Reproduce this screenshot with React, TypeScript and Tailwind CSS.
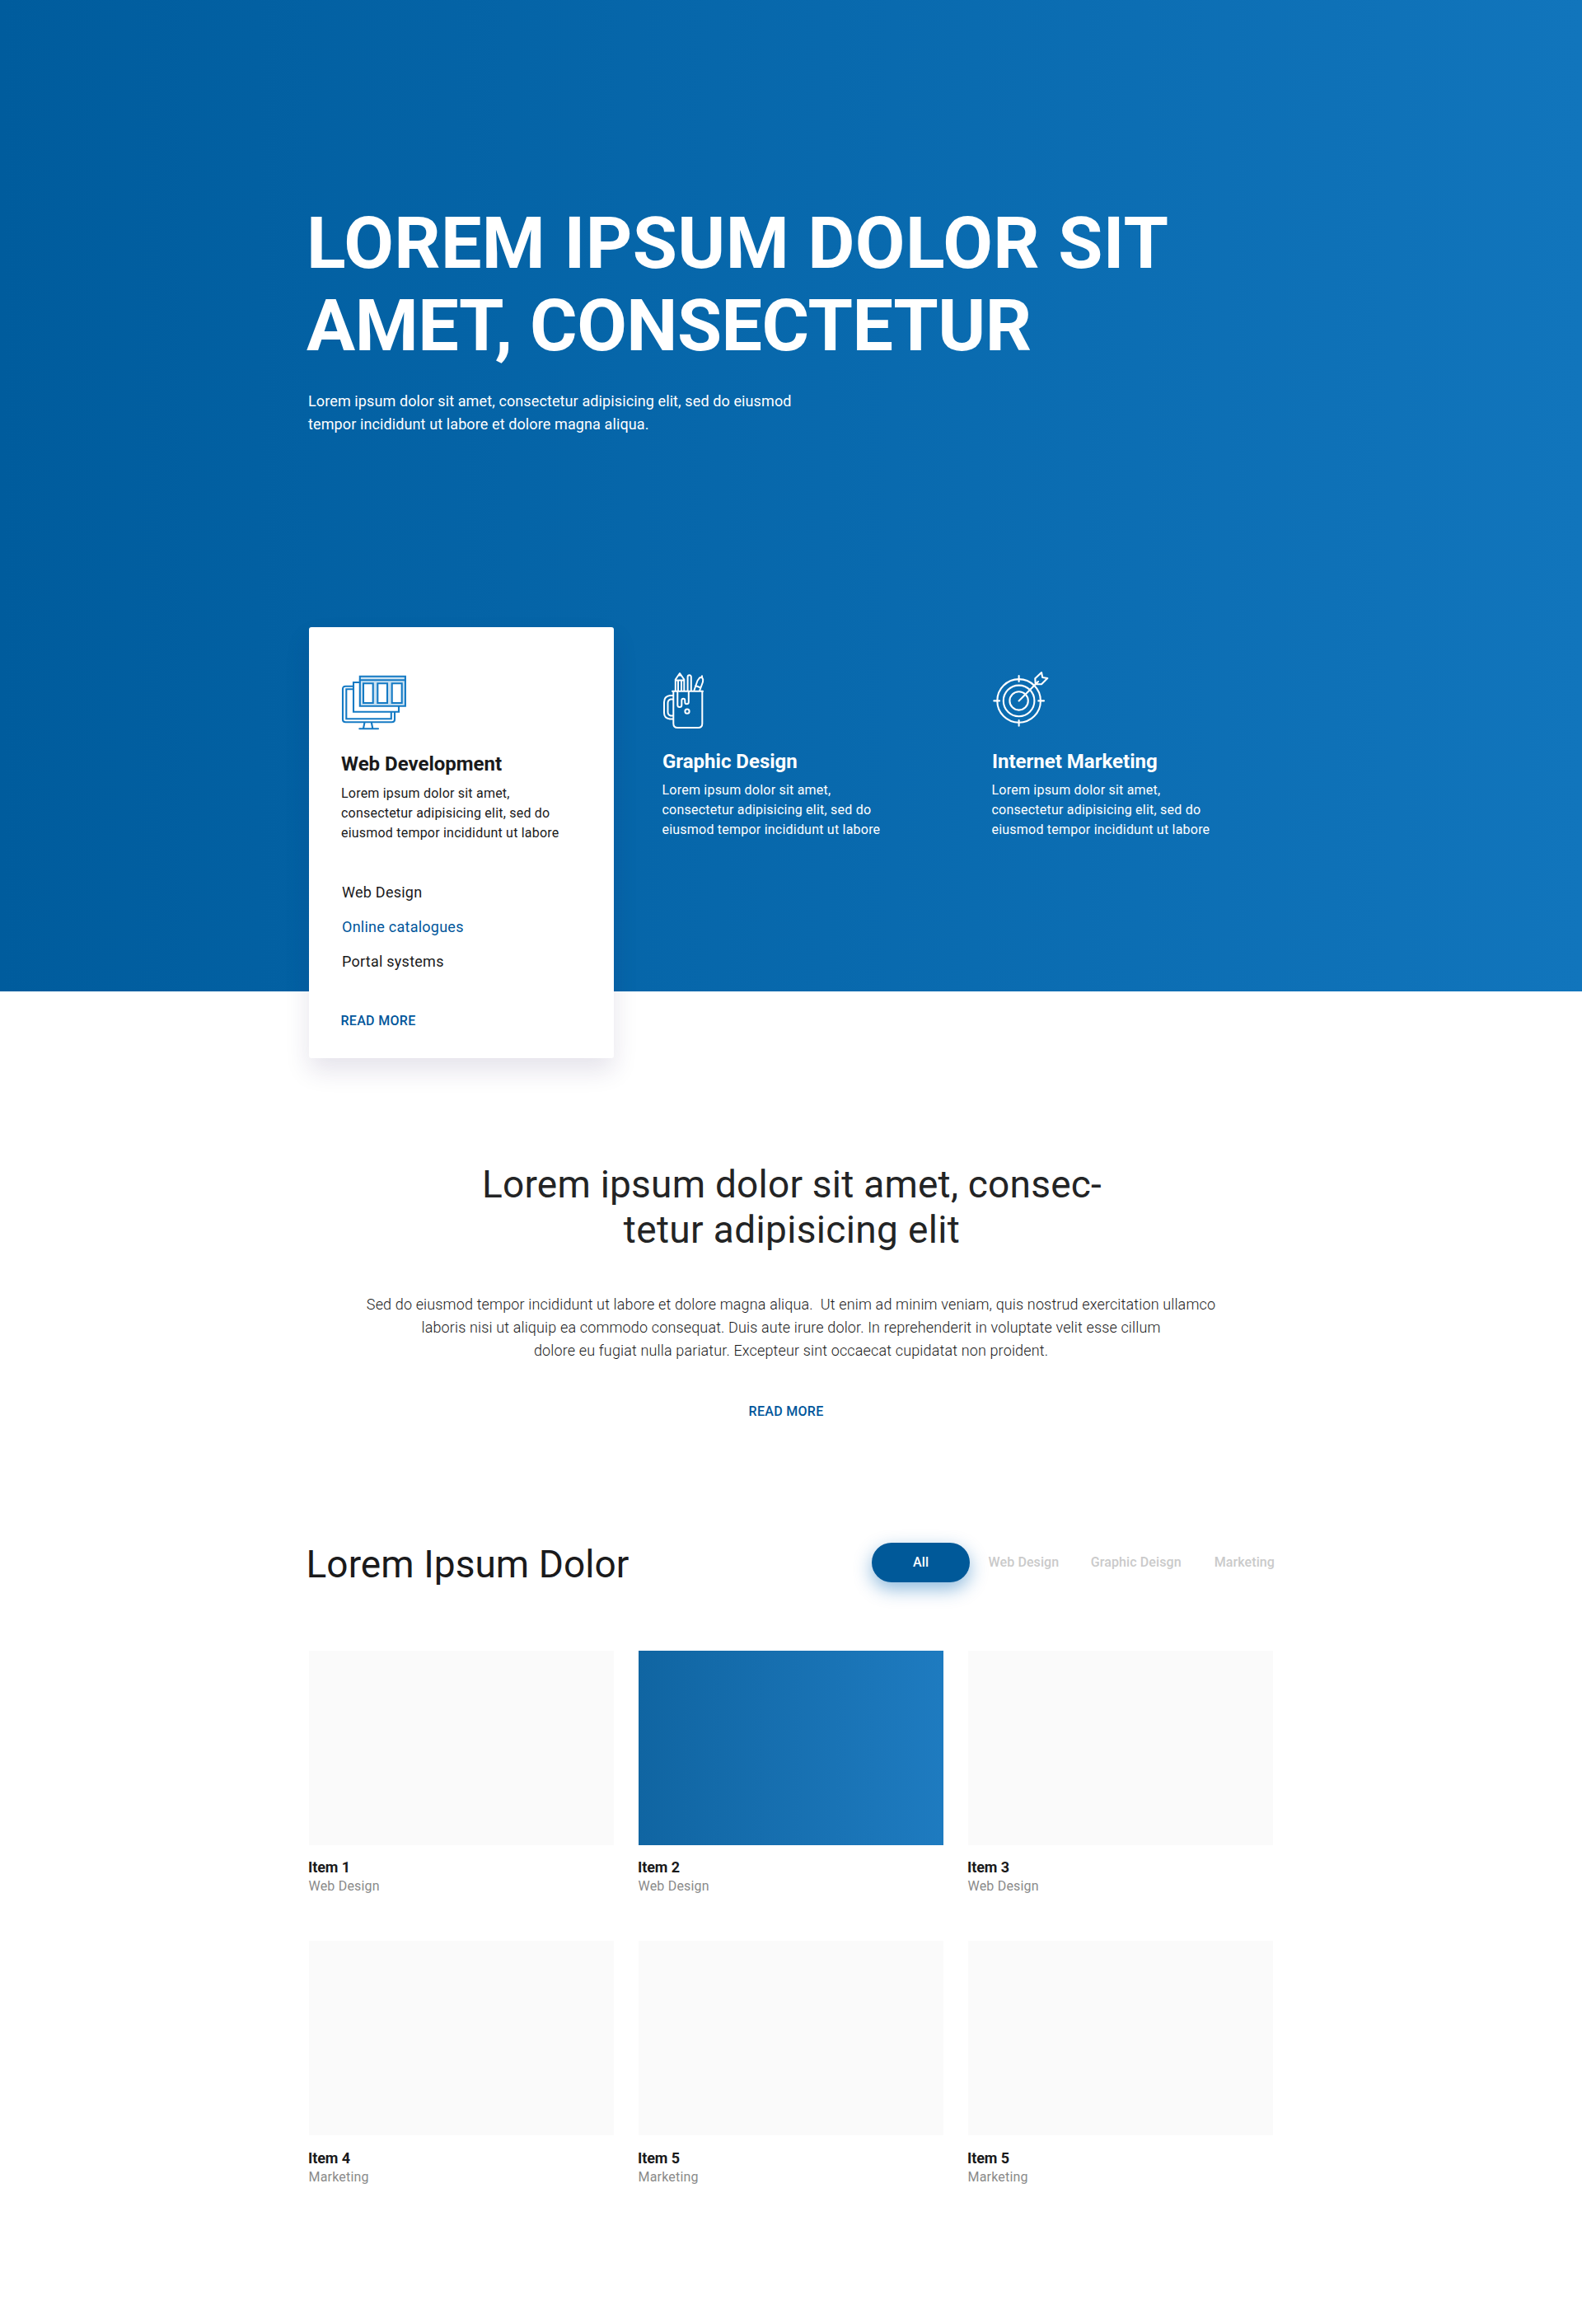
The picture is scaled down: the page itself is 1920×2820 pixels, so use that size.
function MonitorIcon() {
  return (
    <svg width="80" height="68" viewBox="0 0 80 68" fill="none" stroke="#147ac4" strokeWidth="2.1" strokeLinecap="round" className="block">
      <path d="M22.8 1.8H77.9V37.8H22.8ZM27 10.3V34H38.7V10.3ZM44.3 10.3V34H56V10.3ZM61.7 10.3V34H73.7V10.3Z" fill="#147ac4" fillOpacity="0.22" fillRule="evenodd" stroke="none" />
      <path d="M22.8 1.8H77.9V37.8H22.8Z" />
      <path d="M22.8 6.3H78" />
      <path d="M27 10.3H38.7V34H27ZM44.3 10.3H56V34H44.3ZM61.7 10.3H73.7V34H61.7Z" />
      <path d="M22.8 9H15V44.7H70V38" />
      <path d="M14 13.7H5.5Q2 13.7 2 17V54Q2 57.3 5.5 57.3H61.5Q65 57.3 65 54V45.5" />
      <path d="M14 17.2H6.3V53.3H60.8V45.5" />
      <path d="M28.4 58L27 65M36.9 58L38.3 65M22.3 65.3H45" />
    </svg>
  );
}

function MugIcon() {
  return (
    <svg width="54" height="70" viewBox="0 0 54 70" fill="none" stroke="#fff" strokeWidth="2" strokeLinecap="round" strokeLinejoin="round" className="block">
      <path d="M12 23.7H49" />
      <path d="M13.3 24V63Q13.3 68 18.3 68H43.3Q48.3 68 48.3 63V24" />
      <path d="M12.7 29H9Q2 30 2 37V50Q2 56.5 9 57.6H12.7" />
      <path d="M12.7 33.5H10Q6.5 34.5 6.5 38V49Q6.5 52.5 10 53.5H12.7" />
      <path d="M15.8 23V9.5L21 2L26.3 9.5V23M15.8 10.5H26.3M19 11V23M23 11V23M20 4.5H22" />
      <path d="M30.6 23V6.5Q30.6 4.3 32.7 4.3T34.8 6.5V23" />
      <path d="M38.5 22.5L42.5 11L45 7.5L47.8 6.5L49.2 9.5L49 12.5L45.3 22.5M40 17L46.5 19.5M48 5.3V6.5" />
      <path d="M18.3 24V40.5Q18.3 43 20.8 43T23.3 40.5V35Q23.3 32.8 25.3 32.8T27.3 35V37Q27.3 39.3 29.5 39.3T31.8 37V24" />
      <circle cx="30" cy="48.2" r="2.6" />
    </svg>
  );
}

function TargetIcon() {
  return (
    <svg width="70" height="70" viewBox="0 0 70 70" fill="none" stroke="#fff" strokeWidth="2.1" strokeLinecap="round" strokeLinejoin="round" className="block">
      <circle cx="32.6" cy="36.4" r="26.3" />
      <circle cx="32.6" cy="36.4" r="18.8" />
      <circle cx="32.6" cy="36.4" r="11.2" />
      <path d="M2.3 36.4H9M56.3 36.4H63M32.6 6V13M32.6 60V66.7" />
      <path d="M32.6 36.4L56 13M52.7 16L52.3 9.3L60 2L61.2 8L67.3 9L60 16.2Z" />
    </svg>
  );
}

const blurb = ["Lorem ipsum dolor sit amet,", "consectetur adipisicing elit, sed do", "eiusmod tempor incididunt ut labore"];

function Lines({ lines }: { lines: string[] }) {
  return (
    <>
      {lines.map((l) => (
        <span key={l} className="block whitespace-pre">
          {l}
        </span>
      ))}
    </>
  );
}

const items = [
  { title: "Item 1", kind: "Web Design", tile: "h-[236px] bg-[#fafafa]", caption: "pt-4" },
  { title: "Item 2", kind: "Web Design", tile: "h-[236px] bg-linear-to-r from-[#1065a2] to-[#1e7bc0]", caption: "pt-4" },
  { title: "Item 3", kind: "Web Design", tile: "h-[236px] bg-[#fafafa]", caption: "pt-4" },
  { title: "Item 4", kind: "Marketing", tile: "h-[236px] bg-[#fafafa]", caption: "pt-[17px]" },
  { title: "Item 5", kind: "Marketing", tile: "h-[236px] bg-[#fafafa]", caption: "pt-[17px]" },
  { title: "Item 5", kind: "Marketing", tile: "h-[236px] bg-[#fafafa]", caption: "pt-[17px]" },
];

export default function App() {
  return (
    <div className="min-h-[2820px] w-full bg-white font-['Roboto',sans-serif] text-[#1a1a1b]">
      <header className="h-[1203px] bg-linear-to-r from-[#005c9d] to-[#1175bc] pt-[245px] text-white">
        <div className="mx-auto w-[1170px]">
          <h1 className="-ml-[3px] text-[88px] font-bold leading-[100px]">
            <span className="block whitespace-pre tracking-[0.37px]">LOREM IPSUM DOLOR SIT</span>
            <span className="block whitespace-pre tracking-[-0.5px]">AMET, CONSECTETUR</span>
          </h1>
          <p className="-ml-px mt-7 text-[18px] leading-7 tracking-[0.11px]">
            <Lines lines={["Lorem ipsum dolor sit amet, consectetur adipisicing elit, sed do eiusmod", "tempor incididunt ut labore et dolore magna aliqua."]} />
          </p>
          <div className="mt-[232px] flex items-start">
            <article className="h-[523px] w-[370px] rounded-[3px] bg-white pl-[39px] pt-[58px] text-[#1a1a1b] shadow-[0_15px_30px_rgba(40,25,90,0.12)]">
              <MonitorIcon />
              <h2 className="mt-[25px] text-[24px] font-bold leading-[30px]">Web Development</h2>
              <p className="mt-[9px] text-[16px] leading-6 tracking-[0.21px]">
                <Lines lines={blurb} />
              </p>
              <ul className="ml-px mt-[39px] text-[18px] leading-[42px] tracking-[0.25px]">
                <li>Web Design</li>
                <li className="text-[#00569b]">Online catalogues</li>
                <li>Portal systems</li>
              </ul>
              <a className="-ml-[0.5px] mt-[39px] block text-[16px] font-medium leading-6 tracking-[0.3px] text-[#00569b]">READ MORE</a>
            </article>
            <article className="ml-[59px] w-[400px] pt-[54px]">
              <MugIcon />
              <h2 className="mt-6 text-[24px] font-bold leading-[30px]">Graphic Design</h2>
              <p className="-ml-[0.5px] mt-2 text-[16px] leading-6 tracking-[0.22px]">
                <Lines lines={blurb} />
              </p>
            </article>
            <article className="pt-[53px]">
              <TargetIcon />
              <h2 className="mt-[25px] text-[24px] font-bold leading-[30px]">Internet Marketing</h2>
              <p className="-ml-[0.5px] mt-2 text-[16px] leading-6 tracking-[0.22px]">
                <Lines lines={blurb} />
              </p>
            </article>
          </div>
        </div>
      </header>

      <section className="flex flex-col items-center pt-[207px] text-center">
        <h2 className="ml-[2px] text-[46px] leading-[55px] text-[#232425]">
          <span className="block whitespace-pre tracking-[0.23px]">Lorem ipsum dolor sit amet, consec-</span>
          <span className="block whitespace-pre tracking-[0.35px]">tetur adipisicing elit</span>
        </h2>
        <p className="mt-[49px] text-[18px] font-light leading-7 tracking-[0.145px]">
          <Lines
            lines={[
              "Sed do eiusmod tempor incididunt ut labore et dolore magna aliqua.  Ut enim ad minim veniam, quis nostrud exercitation ullamco",
              "laboris nisi ut aliquip ea commodo consequat. Duis aute irure dolor. In reprehenderit in voluptate velit esse cillum",
              "dolore eu fugiat nulla pariatur. Excepteur sint occaecat cupidatat non proident.",
            ]}
          />
        </p>
        <a className="mr-3 mt-12 text-[16px] font-medium leading-6 tracking-[0.3px] text-[#00569b]">READ MORE</a>
      </section>

      <section className="mx-auto w-[1170px] pt-[147px]">
        <div className="-mr-[2px] flex h-12 items-center">
          <h2 className="-ml-[3.5px] mt-1 text-[46px] leading-[48px] tracking-[0.06px]">Lorem Ipsum Dolor</h2>
          <nav className="ml-auto flex items-center text-[16px] font-medium leading-6 tracking-[0.1px] text-[#cacaca]">
            <a className="mr-[23px] flex h-12 w-[119px] items-center justify-center rounded-full bg-[#005999] pl-px text-white shadow-[0_8px_22px_rgba(0,100,180,0.45)]">All</a>
            <a className="mr-[38.5px]">Web Design</a>
            <a className="mr-10">Graphic Deisgn</a>
            <a>Marketing</a>
          </nav>
        </div>
        <div className="mt-[83px] grid grid-cols-3 gap-x-[30px] gap-y-[55px]">
          {items.map((it, i) => (
            <figure key={i}>
              <div className={it.tile} />
              <figcaption className={it.caption}>
                <h3 className="-ml-px text-[18px] font-bold leading-[22px] tracking-[-0.1px]">{it.title}</h3>
                <p className="-ml-[0.5px] mt-px text-[16px] leading-[22px] tracking-[0.2px] text-[#8a8a8a]">{it.kind}</p>
              </figcaption>
            </figure>
          ))}
        </div>
      </section>
    </div>
  );
}
